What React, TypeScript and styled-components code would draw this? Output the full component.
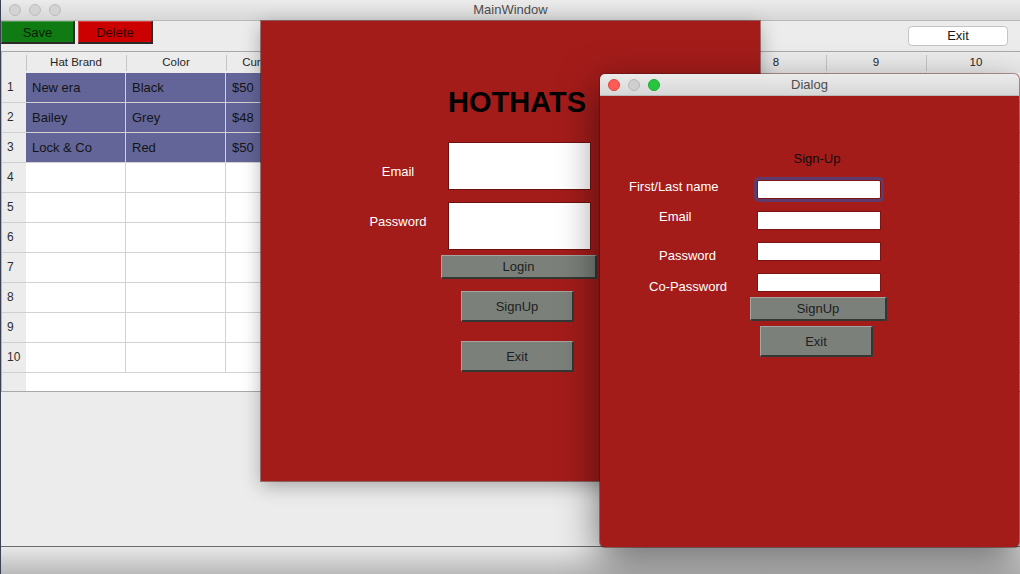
import React from "react";
import styled, { createGlobalStyle } from "styled-components";

const GlobalStyle = createGlobalStyle`
  html, body { margin: 0; padding: 0; background: #1d2130; overflow: hidden; }
  body { font-family: "Liberation Sans", Helvetica, Arial, sans-serif; font-size: 13px; }
  * { box-sizing: border-box; }
`;

const FONT = `"Liberation Sans", Helvetica, Arial, sans-serif`;

const Desktop = styled.div`
  position: relative;
  width: 1020px;
  height: 574px;
  overflow: hidden;
`;

const MainWindow = styled.div`
  display: flex;
  flex-direction: column;
  width: 1020px;
  height: 574px;
  background: #ececec;
  border-left: 1px solid #3b4052;
  overflow: hidden;
`;

const TitleBar = styled.div<{ $h: number }>`
  display: grid;
  grid-template-columns: 1fr auto 1fr;
  align-items: center;
  height: ${(p) => p.$h}px;
  flex: none;
  background: linear-gradient(#ebebeb, #d7d7d7);
  border-bottom: 1px solid #b9b9b9;
`;

const Lights = styled.div`
  display: flex;
  gap: 8px;
  padding-left: 8px;
`;

const Light = styled.span<{ $bg: string; $bd: string }>`
  width: 12px;
  height: 12px;
  border-radius: 50%;
  background: ${(p) => p.$bg};
  border: 1px solid ${(p) => p.$bd};
`;

const WinTitle = styled.div<{ $dy?: number }>`
  font: 13px/16px ${FONT};
  color: #4d4d4d;
  padding-top: ${(p) => p.$dy ?? 0}px;
`;

const Toolbar = styled.div`
  display: flex;
  align-items: flex-start;
  height: 30px;
  flex: none;
`;

const ToolButton = styled.button<{ $bg: string; $w: number; $ml: number }>`
  width: ${(p) => p.$w}px;
  height: 23px;
  margin-left: ${(p) => p.$ml}px;
  padding: 1px 0 0;
  background: ${(p) => p.$bg};
  border-style: solid;
  border-width: 1px 2px 2px 1px;
  border-color: rgba(255, 255, 255, 0.25) #2a2a2a #2a2a2a rgba(255, 255, 255, 0.25);
  font: 13px/19px ${FONT};
  color: rgba(0, 0, 0, 0.78);
`;

const TopExit = styled.button`
  margin: 5px 12px 0 auto;
  width: 100px;
  height: 20px;
  padding: 0;
  background: #fff;
  border: 1px solid #c4c4c4;
  border-radius: 4px;
  font: 13px/18px ${FONT};
  color: #1a1a1a;
`;

const TableFrame = styled.div`
  height: 341px;
  flex: none;
  border-top: 1px solid #a9a9a9;
  border-bottom: 1px solid #a9a9a9;
  border-left: 1px solid #b5b5b5;
  background: linear-gradient(to right, #ececec 24px, #fff 24px);
  overflow: hidden;
`;

const HeaderRow = styled.div`
  display: grid;
  grid-template-columns: 24px repeat(10, 100px);
  height: 21px;
  background: #ececec;
`;

const HeaderCell = styled.div`
  text-align: center;
  font: 11.5px/21px ${FONT};
  color: #262626;
  background: linear-gradient(#c6c6c6, #c6c6c6) left center / 1px 16px no-repeat;
  white-space: nowrap;
  overflow: hidden;
`;

const BodyRow = styled.div`
  display: grid;
  grid-template-columns: 24px repeat(10, 100px);
  height: 30px;
`;

const RowHead = styled.div`
  background: #ececec;
  border-bottom: 1px solid #cfcfcf;
  padding-left: 5px;
  font: 12px/29px ${FONT};
  color: #2e2e2e;
`;

const Cell = styled.div<{ $sel: boolean }>`
  background: ${(p) => (p.$sel ? "#636598" : "#fff")};
  border-right: 1px solid #d2d2d2;
  border-bottom: 1px solid #d2d2d2;
  padding-left: 6px;
  font: 13px/29px ${FONT};
  color: #141414;
  white-space: nowrap;
  overflow: hidden;
`;

const Filler = styled.div`
  flex: 1;
`;

const StatusBar = styled.div`
  height: 28px;
  flex: none;
  border-top: 1px solid #6c6c6c;
  background: linear-gradient(#e8e8e8, #bababa);
`;

/* Login window */
const LoginWindow = styled.section`
  position: absolute;
  left: 261px;
  top: 21px;
  width: 499px;
  height: 460px;
  background: #a31c1a;
  box-shadow: 0 5px 18px rgba(0, 0, 0, 0.3), 0 0 0 1px rgba(110, 18, 16, 0.5);
  display: flex;
  flex-direction: column;
  align-items: flex-start;
`;

const Brand = styled.h1`
  margin: 67px 0 0;
  width: 100%;
  padding-left: 13px;
  text-align: center;
  font: bold 29px/29px ${FONT};
  color: #000;
`;

const LoginForm = styled.div`
  display: grid;
  grid-template-columns: 97px 143px;
  row-gap: 12px;
  margin: 25px 0 0 90px;
`;

const LoginLabel = styled.label<{ $mt: number }>`
  align-self: start;
  margin-top: ${(p) => p.$mt}px;
  padding-right: 3px;
  text-align: center;
  font: 13px/16px ${FONT};
  color: #fff;
`;

const BigInput = styled.input`
  width: 143px;
  height: 48px;
  margin: 0;
  padding: 0;
  border: 1px solid #6e1010;
  background: #fff;
  outline: none;
`;

const ButtonStack = styled.div<{ $ml: number; $mt: number }>`
  display: flex;
  flex-direction: column;
  align-items: flex-start;
  margin: ${(p) => p.$mt}px 0 0 ${(p) => p.$ml}px;
`;

const GrayButton = styled.button<{ $w: number; $h: number; $ml?: number; $mt?: number }>`
  width: ${(p) => p.$w}px;
  height: ${(p) => p.$h}px;
  margin: ${(p) => p.$mt ?? 0}px 0 0 ${(p) => p.$ml ?? 0}px;
  padding: 1px 0 0;
  background: #7b807b;
  border-style: solid;
  border-width: 1px 2px 2px 1px;
  border-color: #a2a6a2 #343834 #343834 #a2a6a2;
  font: 13px/16px ${FONT};
  color: #1e1e1e;
`;

/* Dialog */
const DialogWindow = styled.section`
  position: absolute;
  left: 600px;
  top: 74px;
  width: 419px;
  height: 473px;
  border-radius: 5px;
  overflow: hidden;
  background: #a31c1a;
  box-shadow: 0 14px 40px rgba(0, 0, 0, 0.55), 0 0 0 1px rgba(90, 20, 20, 0.45);
  display: flex;
  flex-direction: column;
`;

const DialogBody = styled.div`
  flex: 1;
  display: flex;
  flex-direction: column;
  align-items: flex-start;
`;

const Heading = styled.div`
  margin-top: 55px;
  width: 100%;
  padding-left: 15px;
  text-align: center;
  font: 13px/16px ${FONT};
  color: #0c0c0c;
`;

const DialogForm = styled.div`
  display: grid;
  grid-template-columns: 137px 124px;
  row-gap: 12px;
  margin: 13px 0 0 20px;
`;

const DialogLabel = styled.label<{ $mt: number; $indent: number }>`
  align-self: start;
  height: 16px;
  margin-top: ${(p) => p.$mt}px;
  margin-bottom: ${(p) => -p.$mt}px;
  padding-left: ${(p) => p.$indent}px;
  font: 13px/16px ${FONT};
  color: #fff;
  white-space: nowrap;
`;

const SmallInput = styled.input<{ $focus?: boolean }>`
  width: 124px;
  height: 19px;
  margin: 0;
  padding: 0;
  border: 1px solid #7c1412;
  border-radius: ${(p) => (p.$focus ? "2px" : "0")};
  background: #fff;
  outline: none;
  box-shadow: ${(p) => (p.$focus ? "0 0 0 3px #5e3b6c" : "none")};
`;

const rows = [
  ["New era", "Black", "$50"],
  ["Bailey", "Grey", "$48"],
  ["Lock & Co", "Red", "$50"],
];

const headers = ["Hat Brand", "Color", "Current Price", "4", "5", "6", "7", "8", "9", "10"];

export default function App() {
  return (
    <Desktop>
      <GlobalStyle />
      <MainWindow>
        <TitleBar $h={21}>
          <Lights>
            <Light $bg="#d3d3d3" $bd="#bcbcbc" />
            <Light $bg="#d3d3d3" $bd="#bcbcbc" />
            <Light $bg="#d3d3d3" $bd="#bcbcbc" />
          </Lights>
          <WinTitle>MainWindow</WinTitle>
          <span />
        </TitleBar>
        <Toolbar>
          <ToolButton $bg="#0f7b12" $w={74} $ml={0}>Save</ToolButton>
          <ToolButton $bg="#cc0000" $w={75} $ml={3}>Delete</ToolButton>
          <TopExit>Exit</TopExit>
        </Toolbar>
        <TableFrame>
          <HeaderRow>
            <span />
            {headers.map((h) => (
              <HeaderCell key={h}>{h}</HeaderCell>
            ))}
          </HeaderRow>
          {Array.from({ length: 10 }, (_, i) => {
            const data = rows[i];
            return (
              <BodyRow key={i}>
                <RowHead>{i + 1}</RowHead>
                {Array.from({ length: 10 }, (_, c) => (
                  <Cell key={c} $sel={!!data && c < 3}>
                    {data && c < 3 ? data[c] : ""}
                  </Cell>
                ))}
              </BodyRow>
            );
          })}
        </TableFrame>
        <Filler />
        <StatusBar />
      </MainWindow>

      <LoginWindow>
        <Brand>HOTHATS</Brand>
        <LoginForm>
          <LoginLabel $mt={22}>Email</LoginLabel>
          <BigInput />
          <LoginLabel $mt={12}>Password</LoginLabel>
          <BigInput type="password" />
        </LoginForm>
        <ButtonStack $ml={180} $mt={5}>
          <GrayButton $w={156} $h={24}>Login</GrayButton>
          <GrayButton $w={113} $h={31} $ml={20} $mt={12}>SignUp</GrayButton>
          <GrayButton $w={113} $h={31} $ml={20} $mt={19}>Exit</GrayButton>
        </ButtonStack>
      </LoginWindow>

      <DialogWindow>
        <TitleBar $h={22}>
          <Lights>
            <Light $bg="#fd5b56" $bd="#e0443e" />
            <Light $bg="#cfcfcf" $bd="#b8b8b8" />
            <Light $bg="#27c63f" $bd="#1eaa33" />
          </Lights>
          <WinTitle $dy={1}>Dialog</WinTitle>
          <span />
        </TitleBar>
        <DialogBody>
          <Heading>Sign-Up</Heading>
          <DialogForm>
            <DialogLabel $mt={-1} $indent={9}>First/Last name</DialogLabel>
            <SmallInput $focus />
            <DialogLabel $mt={-2} $indent={39}>Email</DialogLabel>
            <SmallInput />
            <DialogLabel $mt={6} $indent={39}>Password</DialogLabel>
            <SmallInput type="password" />
            <DialogLabel $mt={6} $indent={29}>Co-Password</DialogLabel>
            <SmallInput type="password" />
          </DialogForm>
          <ButtonStack $ml={150} $mt={5}>
            <GrayButton $w={137} $h={24}>SignUp</GrayButton>
            <GrayButton $w={113} $h={31} $ml={10} $mt={5}>Exit</GrayButton>
          </ButtonStack>
        </DialogBody>
      </DialogWindow>
    </Desktop>
  );
}
